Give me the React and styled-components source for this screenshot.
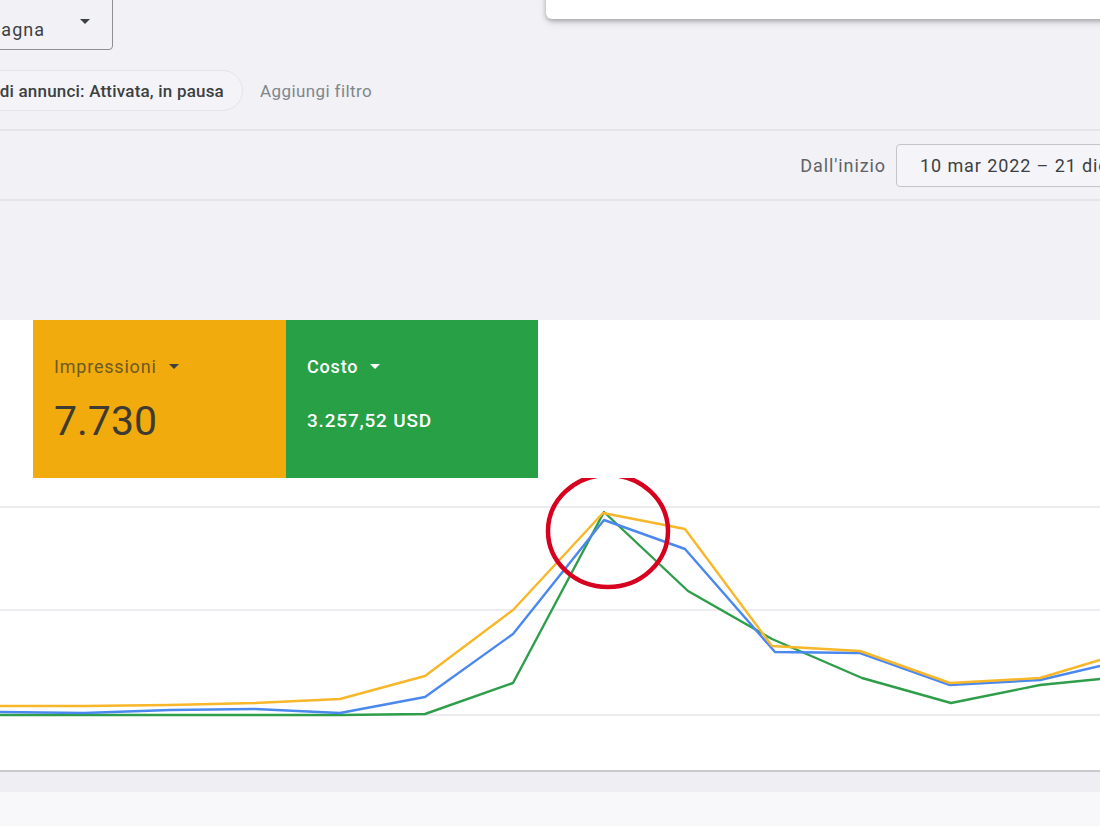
import React from "react";
import styled, { createGlobalStyle } from "styled-components";

const GlobalStyle = createGlobalStyle`
  html, body {
    margin: 0;
    padding: 0;
    background: #f1f1f6;
  }
  body {
    font-family: Roboto, "Liberation Sans", Arial, sans-serif;
    color: #3c4043;
  }
`;

const Page = styled.div`
  position: relative;
  width: 1100px;
  height: 826px;
  overflow: hidden;
  display: flex;
  flex-direction: column;
  background: #f1f1f6;
`;

const Popup = styled.div`
  position: absolute;
  top: -20px;
  left: 546px;
  width: 600px;
  height: 39px;
  background: #fff;
  border-radius: 0 0 0 6px;
  box-shadow: 0 2px 5px rgba(0, 0, 0, 0.28), 0 4px 10px rgba(0, 0, 0, 0.08);
`;

const TopRow = styled.div`
  height: 50px;
  display: flex;
`;

const EdgeCell = styled.div`
  width: ${(p) => p.width}px;
  flex-shrink: 0;
  display: flex;
  justify-content: flex-end;
  align-items: ${(p) => p.align || "center"};
`;

const DropBox = styled.div`
  flex-shrink: 0;
  height: 62px;
  margin-top: -12px;
  box-sizing: border-box;
  border: 1px solid #8c8f94;
  border-radius: 4px;
  display: flex;
  align-items: flex-end;
  gap: 35px;
  padding: 0 22px 8px 16px;
  font-size: 18px;
  letter-spacing: 1px;
  line-height: 22px;
  color: #3c4043;
  white-space: nowrap;
`;

const Caret = styled.span`
  display: inline-block;
  flex-shrink: 0;
  width: 0;
  height: 0;
  border-left: ${(p) => p.size || 5}px solid transparent;
  border-right: ${(p) => p.size || 5}px solid transparent;
  border-top: ${(p) => p.size || 5}px solid ${(p) => p.color || "#3c4043"};
`;

const DropCaret = styled(Caret)`
  align-self: center;
  margin-top: 12px;
`;

const FilterRow = styled.div`
  margin-top: 20px;
  height: 41px;
  display: flex;
  align-items: center;
  gap: 17px;
`;

const Chip = styled.div`
  flex-shrink: 0;
  height: 41px;
  box-sizing: border-box;
  display: flex;
  align-items: center;
  padding: 0 18px 0 20px;
  border: 1px solid #e3e3e9;
  border-radius: 21px;
  background: #f4f4f8;
  font-size: 17px;
  letter-spacing: 0.2px;
  font-weight: 500;
  color: #3c4043;
  white-space: nowrap;
`;

const AddFilter = styled.span`
  font-size: 17px;
  letter-spacing: 0.4px;
  color: #80868b;
  white-space: nowrap;
`;

const Divider = styled.div`
  height: 2px;
  background: #e4e4ea;
  margin-top: ${(p) => p.top || 0}px;
`;

const DateRow = styled.div`
  height: 68px;
  display: flex;
  align-items: center;
  justify-content: flex-end;
  gap: 10px;
  font-size: 18px;
  letter-spacing: 0.9px;
`;

const DateLabel = styled.span`
  color: #5f6368;
`;

const DateBox = styled.div`
  flex-shrink: 0;
  width: 300px;
  height: 43px;
  margin-right: -96px;
  box-sizing: border-box;
  border: 1px solid #c4c4ca;
  border-radius: 4px;
  background: #f5f5f9;
  display: flex;
  align-items: center;
  padding-left: 23px;
  color: #3c4043;
  white-space: nowrap;
`;

const Panel = styled.section`
  margin-top: 119px;
  height: 450px;
  background: #fff;
  display: flex;
  flex-direction: column;
`;

const Cards = styled.div`
  display: flex;
  padding-left: 33px;
  height: 158px;
`;

const MetricCard = styled.div`
  width: ${(p) => p.width}px;
  box-sizing: border-box;
  padding: 34px 0 0 21px;
  background: ${(p) => p.bg};
  color: ${(p) => p.fg};
  display: flex;
  flex-direction: column;
`;

const MetricLabel = styled.div`
  display: flex;
  align-items: center;
  gap: 12px;
  height: 24px;
  font-size: 18px;
  letter-spacing: 0.8px;
  font-weight: ${(p) => (p.bold ? 500 : 400)};
  color: ${(p) => p.color};
`;

const BigValue = styled.div`
  margin-top: 18px;
  font-size: 41px;
  line-height: 50px;
  font-weight: 400;
  color: #3d3a33;
`;

const SmallValue = styled.div`
  margin-top: 28px;
  font-size: 19px;
  line-height: 30px;
  font-weight: 500;
  letter-spacing: 0.8px;
  color: #fff;
`;

const Chart = styled.svg`
  display: block;
  width: 1100px;
  height: 292px;
`;

const Footer = styled.div`
  flex: 1;
  border-top: 2px solid #c9c9ce;
  background: linear-gradient(#efeef2 0, #efeef2 20px, #f8f8fb 20px);
`;

const yellow = [
  [0, 228], [84, 228], [170, 227], [255, 225], [340, 221], [425, 198],
  [513, 132], [603, 35], [685, 51], [772, 168], [860, 173], [950, 205],
  [1040, 200], [1100, 182], [1130, 171],
];
const blue = [
  [0, 234], [84, 235], [170, 232], [255, 231], [340, 235], [425, 219],
  [513, 156], [604, 42], [685, 71], [775, 174], [860, 175], [950, 207],
  [1040, 202], [1100, 188], [1130, 181],
];
const green = [
  [0, 237], [84, 237], [170, 237], [255, 237], [340, 237], [425, 236],
  [513, 205], [604, 34], [688, 113], [772, 161], [862, 200], [951, 225],
  [1040, 207], [1100, 201], [1130, 198],
];

const toPoints = (pts) => pts.map(([x, y]) => `${x},${y}`).join(" ");

function TrendChart() {
  return (
    <Chart viewBox="0 0 1100 292">
      {[29, 132, 237].map((y) => (
        <line key={y} x1="0" x2="1100" y1={y} y2={y} stroke="#ebebf0" strokeWidth="2" />
      ))}
      <polyline points={toPoints(green)} fill="none" stroke="#2f9e4a" strokeWidth="2.4" strokeLinejoin="round" />
      <polyline points={toPoints(blue)} fill="none" stroke="#4a88ee" strokeWidth="2.4" strokeLinejoin="round" />
      <polyline points={toPoints(yellow)} fill="none" stroke="#f8b629" strokeWidth="2.4" strokeLinejoin="round" />
      <ellipse cx="608" cy="53" rx="60" ry="56" fill="none" stroke="#d7001e" strokeWidth="4.5" />
    </Chart>
  );
}

export default function App() {
  return (
    <>
      <GlobalStyle />
      <Page>
        <Popup />
        <TopRow>
          <EdgeCell width={113} align="flex-start">
            <DropBox>
              <span>Campagna</span>
              <DropCaret />
            </DropBox>
          </EdgeCell>
        </TopRow>

        <FilterRow>
          <EdgeCell width={243}>
            <Chip>Stato del gruppo di annunci: Attivata, in pausa</Chip>
          </EdgeCell>
          <AddFilter>Aggiungi filtro</AddFilter>
        </FilterRow>

        <Divider top={18} />
        <DateRow>
          <DateLabel>Dall'inizio</DateLabel>
          <DateBox>10 mar 2022 – 21 dic 2022</DateBox>
        </DateRow>
        <Divider />

        <Panel>
          <Cards>
            <MetricCard width={253} bg="#f2ab0c">
              <MetricLabel color="#6e5a24">
                Impressioni <Caret color="#3c4043" />
              </MetricLabel>
              <BigValue>7.730</BigValue>
            </MetricCard>
            <MetricCard width={252} bg="#27a046">
              <MetricLabel bold color="#fff">
                Costo <Caret color="#fff" />
              </MetricLabel>
              <SmallValue>3.257,52 USD</SmallValue>
            </MetricCard>
          </Cards>
          <TrendChart />
        </Panel>
        <Footer />
      </Page>
    </>
  );
}
